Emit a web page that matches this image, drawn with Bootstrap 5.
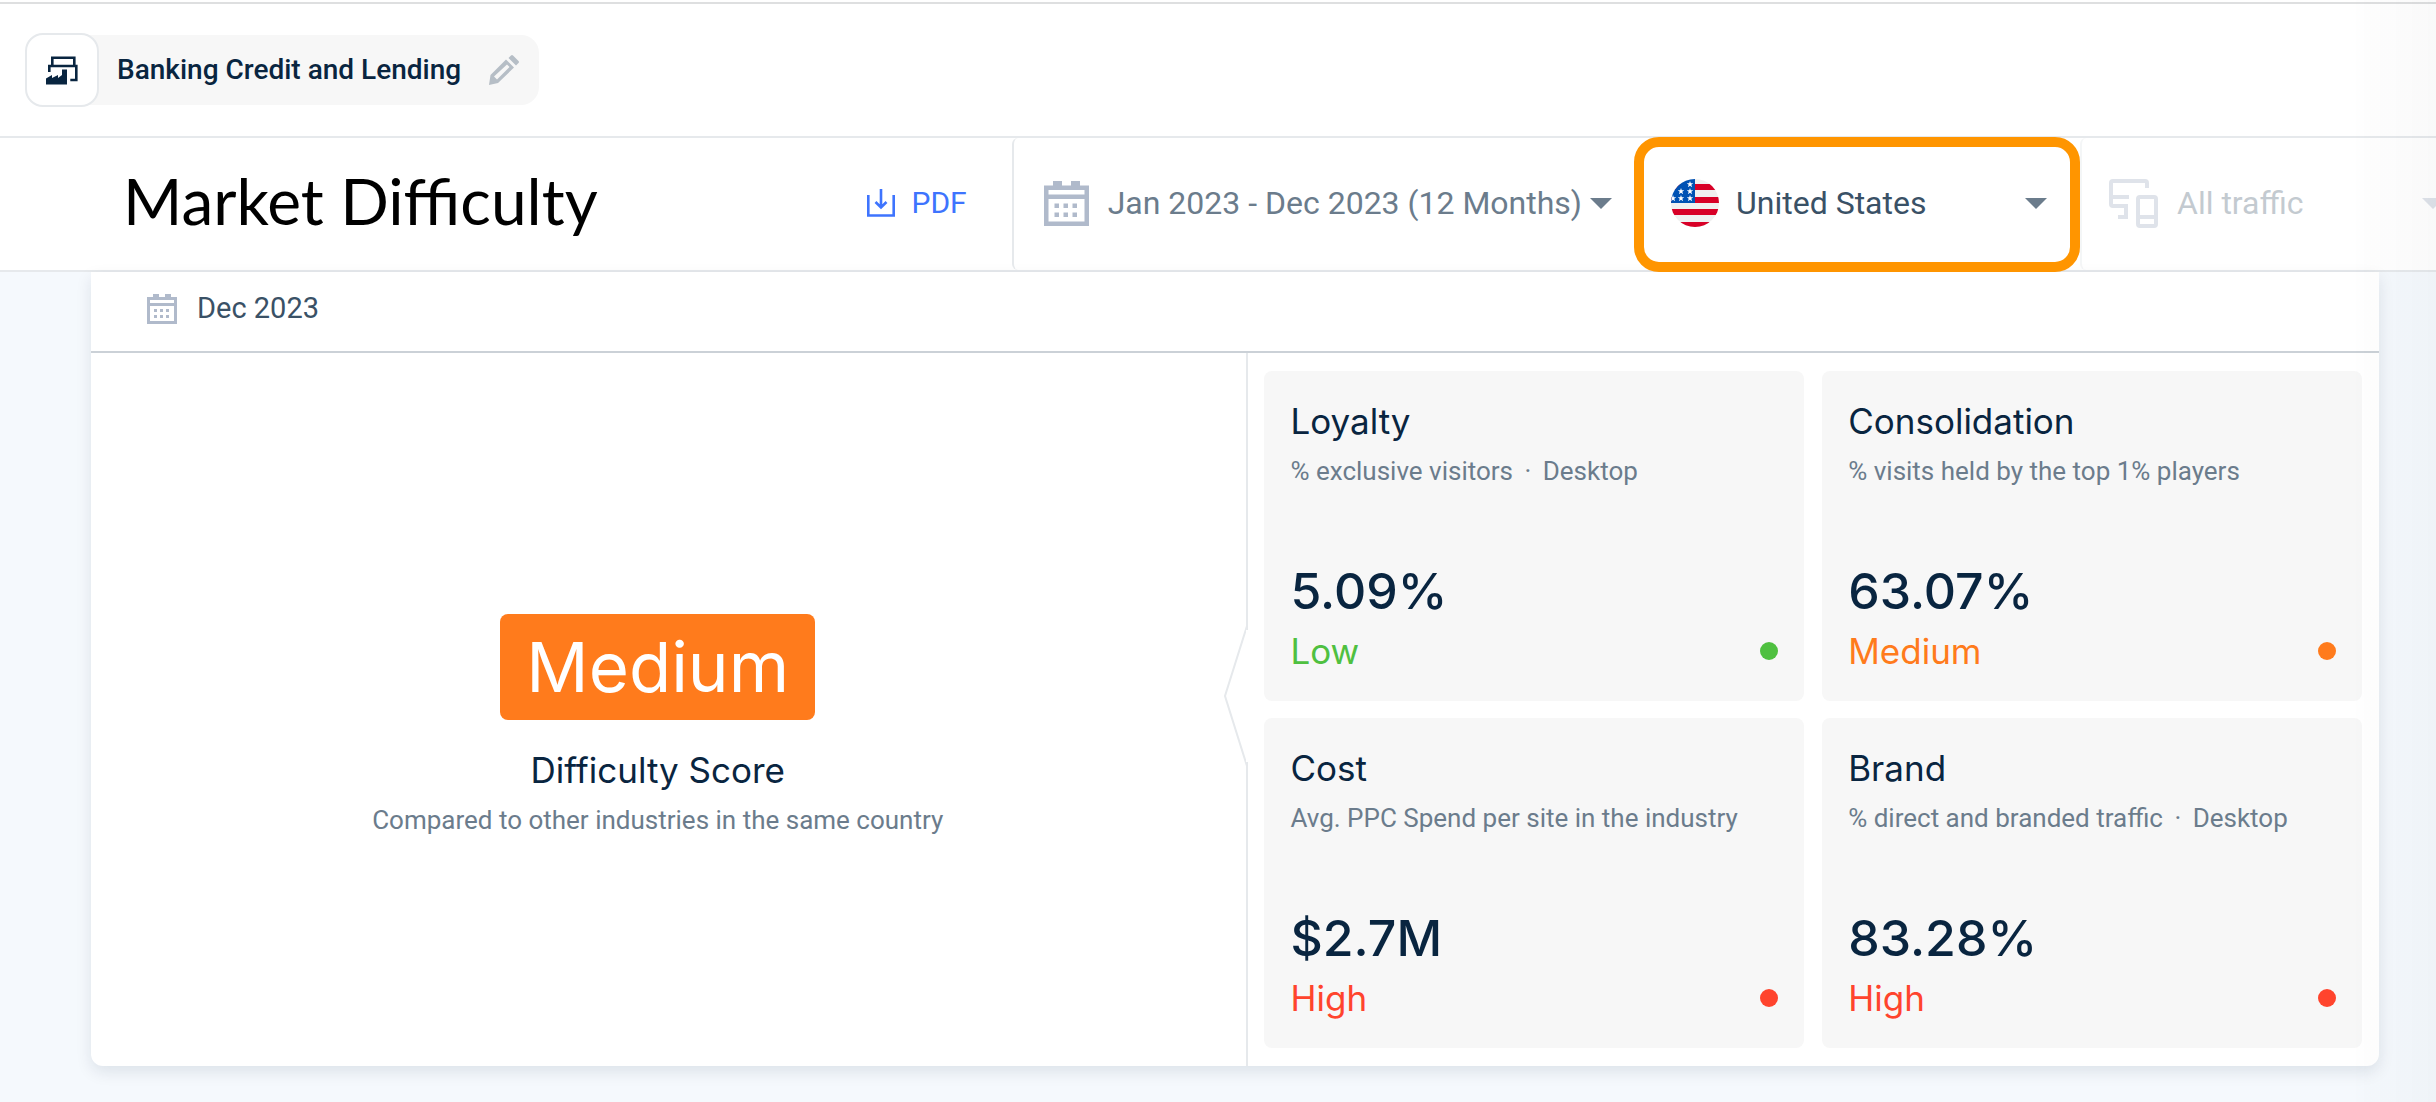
<!DOCTYPE html>
<html lang="en">
<head>
<meta charset="utf-8">
<meta name="viewport" content="width=device-width, initial-scale=1">
<title>Market Difficulty</title>
<link rel="stylesheet" href="https://cdn.jsdelivr.net/npm/bootstrap@5.3.0/dist/css/bootstrap.min.css">
<style>
  body { font-family: Roboto, "Liberation Sans", sans-serif; background: #f5f9fd; color: #092540; }
  body::after { content: ""; position: fixed; inset: 0 0 0 auto; width: 80px; pointer-events: none; z-index: 5;
    background: linear-gradient(90deg, rgba(0,10,20,.004), rgba(0,10,20,.022)); }
  svg { display: block; flex: none; }
  .page-head { padding-top: 2px; }
  .topbar { border-top: 2px solid #dedfe0; padding: 29px 25px; border-bottom: 2px solid #e6e9ec; }
  .crumb-icon { width: 74px; height: 74px; border: 2px solid #e6e9ec; border-radius: 18px; background: #fff; }
  .crumb { height: 70px; margin-left: -16px; padding: 0 20px 0 34px; background: #f7f7f7; border-radius: 0 18px 18px 0; font-size: 28px; font-weight: 500; color: #092540; gap: 28px; }
  .filterbar { height: 134px; border-bottom: 2px solid #e6e9ec; }
  .page-title { font-family: Lato, sans-serif; font-weight: 400; font-size: 64px; line-height: 76px; color: #000; padding: 0 0 6px 123px; }
  .btn-pdf { color: #3e74fe; font-size: 30px; line-height: 44px; gap: 16px; padding: 0 45px 2px; }
  .btn-filter { height: 132px; border: 0; border-left: 2px solid #e6e9ec; border-radius: 6px; font-size: 32px; color: #6b7c8c; text-align: left; gap: 19px; padding: 0 22px 2px 30px; }
  .btn-country { height: 135px; width: 446px; border: 10px solid #ff9500; border-radius: 25px; color: #3a5166; background: #fff; gap: 17px; padding: 0 23px 2px 27px; }
  .btn-traffic { width: 356px; opacity: .4; padding: 0 0 2px 27px; }
  .sheet { margin: 0 57px 36px 91px; background: #fff; border-radius: 0 0 12px 12px; box-shadow: 0 6px 16px rgba(14,30,62,.1); }
  .sheet-head { height: 81px; padding: 0 56px 5px; gap: 20px; border-bottom: 2px solid #cbd1d7; font-size: 29px; color: #3a5166; }
  .score-col { flex: 1; min-width: 0; padding: 32px 22px 0 0; }
  .tile-col { flex: none; width: 49.5%; border-left: 2px solid #e6e9ec; padding: 18px 17px 18px 16px; position: relative; }
  .notch { position: absolute; left: -24px; top: 273px; }
  .tiles { display: grid; grid-template-columns: 1fr 1fr; gap: 17px 18px; }
  .tile { height: 330px; background: #f7f7f7; border-radius: 8px; padding: 28px 26px; }
  .geo { font-family: Inter, sans-serif; }
  .score-badge { background: #ff7b1c; color: #fff; border-radius: 8px; font-size: 69px; line-height: 106px; padding: 0 26px; }
  .label-lg { font-size: 35px; line-height: 44px; font-weight: 400; margin: 0; }
  .label-sm { font-size: 26px; line-height: 36px; color: #6b7c8c; margin: 10px 0 0; }
  .figure-lg { font-size: 50px; line-height: 60px; font-weight: 500; margin-bottom: 8px; }
  .sep { padding: 0 5px; }
  .dot { width: 18px; height: 18px; border-radius: 50%; background: currentColor; }
  .is-low { color: #4fc040; } .is-medium { color: #ff7b1c; } .is-high { color: #ff442d; }
</style>
<script defer src="https://cdn.jsdelivr.net/npm/bootstrap@5.3.0/dist/js/bootstrap.bundle.min.js"></script>
</head>
<body>
<svg width="0" height="0" class="position-absolute" aria-hidden="true">
  <symbol id="calendar" viewBox="0 0 30 30">
    <path fill-rule="evenodd" fill="#b0bacb" d="M6 0h6v3h6V0h6v3h6v27H0V3h6zM3 6v3h24V6zM3 12v15h24V12z"/>
    <path fill="#b0bacb" d="M7 15h3v3H7zM13 15h3v3h-3zM19 15h3v3h-3zM7 21h3v3H7zM13 21h3v3h-3zM19 21h3v3h-3z"/>
  </symbol>
</svg>
<div class="page-head bg-white">
  <header class="topbar d-flex align-items-center">
    <div class="crumb-icon d-flex align-items-center justify-content-center position-relative">
      <svg width="32" height="29" viewBox="0 0 32 29"><path fill="none" stroke="#092540" stroke-width="2.600" d="M6.300 9V1.800h22V9M3.300 16v-6h27v14h-6"/><path fill="#092540" d="M0 28.500v-6l6-3.500v3l6-3v3l4-3v-5.500h5v15z"/></svg>
    </div>
    <div class="crumb d-flex align-items-center">
      <span>Banking Credit and Lending</span>
      <button class="btn p-0 border-0" aria-label="Rename"><svg width="30" height="30" viewBox="0 0 30 30"><path fill="#b6bec6" fill-rule="evenodd" d="M0 30l1.500-10L17 4.500l8 8L9 28zM5 21.500l3 3L20.500 12l-2.500-2.500zM19.500 3L22 .5q1-1 2 0L29.500 6q1 1 0 2L27 10.500z"/></svg></button>
    </div>
  </header>
  <div class="filterbar d-flex align-items-center">
    <h1 class="page-title mb-0 me-auto">Market Difficulty</h1>
    <button class="btn btn-pdf d-flex align-items-center border-0">
      <svg width="28" height="28" viewBox="0 0 28 28" fill="none" stroke="#3e74fe" stroke-width="2.600"><path d="M1.300 6v20.500h25.400V6M14 0v18M8.500 13l5.500 5.500 5.500-5.500"/></svg>PDF</button>
    <button class="btn btn-filter d-flex align-items-center">
      <svg width="45" height="45"><use href="#calendar"/></svg>
      <span class="d-flex align-items-center gap-2">Jan 2023 - Dec 2023 (12 Months)
      <svg width="22" height="11" viewBox="0 0 22 11"><path fill="#6b7c8c" d="M0 0h22L11 11z"/></svg></span>
    </button>
    <button class="btn btn-filter btn-country d-flex align-items-center">
      <svg width="48" height="48" viewBox="0 0 48 48"><clipPath id="disc"><circle cx="24" cy="24" r="24"/></clipPath><g clip-path="url(#disc)"><path fill="#f0f0f0" d="M0 0h48v48H0z"/><path fill="#d80027" d="M0 5h48v6H0zM0 18h48v6H0zM0 30h48v6H0zM0 43h48v5H0z"/><path fill="#0052b4" d="M0 0h24v24H0z"/><g fill="#fff"><path id="star" d="M19 2l.8 2.300h2.500l-2 1.500.8 2.400-2.100-1.500-2.100 1.500.8-2.400-2-1.500h2.500z"/><use href="#star" y="7"/><use href="#star" y="14"/><use href="#star" x="-9" y="7"/><use href="#star" x="-9" y="14"/><use href="#star" x="-17" y="14"/></g></g></svg>
      <span class="me-auto">United States</span>
      <svg width="22" height="11" viewBox="0 0 22 11"><path fill="#6b7c8c" d="M0 0h22L11 11z"/></svg>
    </button>
    <button class="btn btn-filter btn-traffic d-flex align-items-center overflow-hidden">
      <svg width="49" height="49" viewBox="0 0 49 49" fill="none" stroke="#b0bacb" stroke-width="4"><path d="M38 9V4q0-2-2-2H4Q2 2 2 4v21q0 2 2 2h13v11H9M20 18H2"/><rect x="29" y="18" width="18" height="29" rx="2"/><path d="M29 38h18"/></svg>
      <span class="me-auto">All traffic</span>
      <svg width="14" height="11" viewBox="0 0 14 11"><path fill="#b0bacb" d="M0 0h22L11 11z"/></svg>
    </button>
  </div>
</div>
<main class="sheet">
  <div class="sheet-head d-flex align-items-center"><svg width="30" height="30"><use href="#calendar"/></svg><span>Dec 2023</span></div>
  <div class="d-flex">
    <section class="score-col d-flex flex-column align-items-center justify-content-center">
      <div class="score-badge geo">Medium</div>
      <h2 class="label-lg geo mt-4 pt-1">Difficulty Score</h2>
      <p class="label-sm">Compared to other industries in the same country</p>
    </section>
    <section class="tile-col">
      <svg class="notch" width="24" height="140" viewBox="0 0 24 140"><path fill="#fff" stroke="#e6e9ec" stroke-width="2" d="M23 0L1 70l22 70"/><path fill="#fff" d="M22 4h2v132h-2z"/></svg>
      <div class="tiles">
        <article class="tile d-flex flex-column">
          <h3 class="label-lg geo">Loyalty</h3><p class="label-sm">% exclusive visitors<span class="sep"> · </span>Desktop</p>
          <div class="figure-lg geo mt-auto">5.09%</div>
          <div class="label-lg geo is-low d-flex align-items-center justify-content-between">Low<i class="dot"></i></div>
        </article>
        <article class="tile d-flex flex-column">
          <h3 class="label-lg geo">Consolidation</h3><p class="label-sm">% visits held by the top 1% players</p>
          <div class="figure-lg geo mt-auto">63.07%</div>
          <div class="label-lg geo is-medium d-flex align-items-center justify-content-between">Medium<i class="dot"></i></div>
        </article>
        <article class="tile d-flex flex-column">
          <h3 class="label-lg geo">Cost</h3><p class="label-sm">Avg. PPC Spend per site in the industry</p>
          <div class="figure-lg geo mt-auto">$2.7M</div>
          <div class="label-lg geo is-high d-flex align-items-center justify-content-between">High<i class="dot"></i></div>
        </article>
        <article class="tile d-flex flex-column">
          <h3 class="label-lg geo">Brand</h3><p class="label-sm">% direct and branded traffic<span class="sep"> · </span>Desktop</p>
          <div class="figure-lg geo mt-auto">83.28%</div>
          <div class="label-lg geo is-high d-flex align-items-center justify-content-between">High<i class="dot"></i></div>
        </article>
      </div>
    </section>
  </div>
</main>
</body>
</html>
